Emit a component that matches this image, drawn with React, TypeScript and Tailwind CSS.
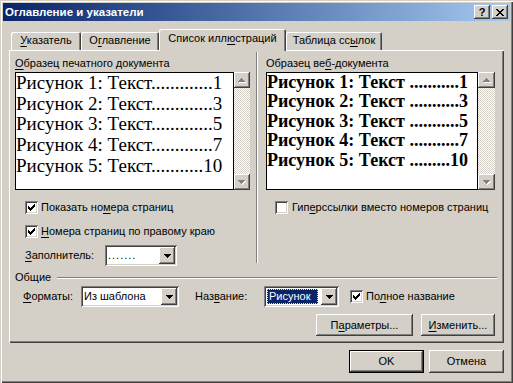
import type { ReactNode } from "react";

const RAISED = "shadow-[inset_-1px_-1px_0_#404040,inset_1px_1px_0_#ffffff,inset_-2px_-2px_0_#808080]";
const SUNKEN = "shadow-[inset_1px_1px_0_#808080,inset_-1px_-1px_0_#ffffff,inset_2px_2px_0_#404040,inset_-2px_-2px_0_#d4d0c8]";
const DEFAULT_BTN =
  "shadow-[inset_0_0_0_1px_#000000,inset_-2px_-2px_0_#404040,inset_2px_2px_0_#ffffff,inset_-3px_-3px_0_#808080]";

function U({ children }: { children: ReactNode }) {
  return <span className="underline decoration-1 underline-offset-[2px]">{children}</span>;
}

function CheckMark() {
  return (
    <svg width="7" height="7" viewBox="0 0 7 7" shapeRendering="crispEdges">
      <rect x="6" y="0" width="1" height="1" />
      <rect x="5" y="1" width="2" height="1" />
      <rect x="0" y="2" width="1" height="1" />
      <rect x="4" y="2" width="3" height="1" />
      <rect x="0" y="3" width="2" height="1" />
      <rect x="3" y="3" width="3" height="1" />
      <rect x="0" y="4" width="5" height="1" />
      <rect x="1" y="5" width="3" height="1" />
      <rect x="2" y="6" width="1" height="1" />
    </svg>
  );
}

function CheckBox({ checked }: { checked?: boolean }) {
  return (
    <div className={`flex h-[13px] w-[13px] shrink-0 items-center justify-center bg-white ${SUNKEN}`}>
      {checked && <CheckMark />}
    </div>
  );
}

function DownArrow() {
  return (
    <svg width="7" height="4" viewBox="0 0 7 4" shapeRendering="crispEdges">
      <rect x="0" y="0" width="7" height="1" />
      <rect x="1" y="1" width="5" height="1" />
      <rect x="2" y="2" width="3" height="1" />
      <rect x="3" y="3" width="1" height="1" />
    </svg>
  );
}

function GreyArrow({ up }: { up?: boolean }) {
  const rows = up
    ? [
        [3, 0, 1],
        [2, 1, 3],
        [1, 2, 5],
        [0, 3, 7],
      ]
    : [
        [0, 0, 7],
        [1, 1, 5],
        [2, 2, 3],
        [3, 3, 1],
      ];
  return (
    <svg width="8" height="5" viewBox="0 0 8 5" shapeRendering="crispEdges">
      {rows.map(([x, y, w]) => (
        <rect key={`s${y}`} x={x + 1} y={y + 1} width={w} height="1" fill="#ffffff" />
      ))}
      {rows.map(([x, y, w]) => (
        <rect key={`a${y}`} x={x} y={y} width={w} height="1" fill="#808080" />
      ))}
    </svg>
  );
}

function ScrollBar({ className }: { className: string }) {
  return (
    <div
      className={`flex shrink-0 flex-col bg-[image:repeating-conic-gradient(#ffffff_0_25%,#d4d0c8_0_50%)] bg-[length:2px_2px] ${className}`}
    >
      <div className={`flex h-[16px] items-center justify-center bg-[#d4d0c8] ${RAISED}`}>
        <GreyArrow up />
      </div>
      <div className="flex-1" />
      <div className={`flex h-[16px] items-center justify-center bg-[#d4d0c8] ${RAISED}`}>
        <GreyArrow />
      </div>
    </div>
  );
}

function Combo({ className, children }: { className: string; children?: ReactNode }) {
  return (
    <div className={`flex h-[21px] shrink-0 bg-white p-[2px] ${SUNKEN} ${className}`}>
      <div className="flex flex-1 items-center overflow-hidden pl-[1px]">{children}</div>
      <div className={`flex w-[16px] items-center justify-center bg-[#d4d0c8] ${RAISED}`}>
        <DownArrow />
      </div>
    </div>
  );
}

function Button({ className, children, primary }: { className: string; children: ReactNode; primary?: boolean }) {
  return (
    <div
      className={`flex items-center justify-center bg-[#d4d0c8] ${primary ? DEFAULT_BTN : RAISED} ${className}`}
    >
      {children}
    </div>
  );
}

function Tab({ className, children, active }: { className: string; children: ReactNode; active?: boolean }) {
  return (
    <div
      className={`flex items-start justify-center rounded-t-[2px] bg-[#d4d0c8] shadow-[inset_1px_1px_0_#ffffff,inset_-1px_0_0_#404040,inset_-2px_0_0_#808080] ${
        active ? "relative z-10 -mb-[1px] h-[22px] pt-[3px]" : "h-[18px] pt-[2px]"
      } ${className}`}
    >
      {children}
    </div>
  );
}

const printLines = [
  "Рисунок 1: Текст.............1",
  "Рисунок 2: Текст.............3",
  "Рисунок 3: Текст.............5",
  "Рисунок 4: Текст.............7",
  "Рисунок 5: Текст...........10",
];

const webLines = [
  "Рисунок 1: Текст ...........1",
  "Рисунок 2: Текст ...........3",
  "Рисунок 3: Текст ...........5",
  "Рисунок 4: Текст ...........7",
  "Рисунок 5: Текст .........10",
];

export default function App() {
  return (
    <div className="flex h-[383px] w-[513px] flex-col bg-[#d4d0c8] p-[3px] font-['Liberation_Sans',Arial,sans-serif] text-[11px] leading-[13px] text-black shadow-[inset_1px_1px_0_#d4d0c8,inset_2px_2px_0_#ffffff,inset_-1px_-1px_0_#404040,inset_-2px_-2px_0_#808080]">
      {/* title bar */}
      <div className="flex h-[18px] shrink-0 items-center bg-linear-to-r from-[#0a246a] to-[#a6caf0] pr-[2px] pl-[2px]">
        <span className="flex-1 text-[11.5px] font-bold text-white">Оглавление и указатели</span>
        <div className="flex gap-[2px]">
          <div className={`flex h-[14px] w-[16px] items-center justify-center bg-[#d4d0c8] text-[11px] font-bold ${RAISED}`}>
            ?
          </div>
          <div className={`flex h-[14px] w-[16px] items-center justify-center bg-[#d4d0c8] ${RAISED}`}>
            <svg width="8" height="7" viewBox="0 0 8 7" shapeRendering="crispEdges">
              <path d="M0 0h2v1h-2zM6 0h2v1h-2zM1 1h2v1h-2zM5 1h2v1h-2zM2 2h4v1h-4zM3 3h2v1h-2zM2 4h4v1h-4zM1 5h2v1h-2zM5 5h2v1h-2zM0 6h2v1h-2zM6 6h2v1h-2z" />
            </svg>
          </div>
        </div>
      </div>

      <div className="mt-[8px] px-[6px]">
        {/* tabs */}
        <div className="flex h-[21px] items-end pl-[2px]">
          <Tab className="w-[70px]">
            <span>
              <U>У</U>казатель
            </span>
          </Tab>
          <Tab className="w-[78px]">
            <span>
              О<U>г</U>лавление
            </span>
          </Tab>
          <Tab className="w-[127px]" active>
            <span>
              Список илл<U>ю</U>страций
            </span>
          </Tab>
          <Tab className="w-[96px]">
            <span>
              Таблица сс<U>ы</U>лок
            </span>
          </Tab>
        </div>

        {/* panel */}
        <div className="flex h-[293px] flex-col shadow-[inset_1px_1px_0_#ffffff,inset_-1px_-1px_0_#404040,inset_-2px_-2px_0_#808080]">
          <div className="flex">
            {/* left column */}
            <div className="flex w-[247px] flex-col pt-[7px] pl-[6px]">
              <div className="h-[13px]">
                <U>О</U>бразец печатного документа
              </div>
              <div className="mt-[2px] flex h-[118px]">
                <div className="w-[219px] overflow-hidden border border-black bg-white font-['Liberation_Serif','Times_New_Roman',serif] text-[19px] leading-[20.7px]">
                  {printLines.map((l) => (
                    <div key={l} className="whitespace-pre">
                      {l}
                    </div>
                  ))}
                </div>
                <ScrollBar className="w-[16px]" />
              </div>
              <div className="mt-[11px] flex items-center gap-[3px] pl-[10px]">
                <CheckBox checked />
                <span>
                  Показать но<U>м</U>ера страниц
                </span>
              </div>
              <div className="mt-[11px] flex items-center gap-[3px] pl-[10px]">
                <CheckBox checked />
                <span>
                  <U>Н</U>омера страниц по правому краю
                </span>
              </div>
              <div className="mt-[7px] flex items-center pl-[10px]">
                <span className="w-[80px]">
                  <U>З</U>аполнитель:
                </span>
                <Combo className="w-[72px]">
                  <span className="tracking-[1px]">.......</span>
                </Combo>
              </div>
            </div>

            {/* separator */}
            <div className="mt-[2px] h-[211px] w-[2px] border-r border-l border-r-white border-l-[#808080]" />

            {/* right column */}
            <div className="flex flex-1 flex-col pt-[7px] pl-[8px]">
              <div className="h-[13px]">
                Образец ве<U>б</U>-документа
              </div>
              <div className="mt-[2px] flex h-[118px]">
                <div className="w-[212px] overflow-hidden border border-black bg-white font-['Liberation_Serif','Times_New_Roman',serif] text-[18px] leading-[19.4px] font-bold">
                  {webLines.map((l) => (
                    <div key={l} className="whitespace-pre">
                      {l}
                    </div>
                  ))}
                </div>
                <ScrollBar className="w-[17px]" />
              </div>
              <div className="mt-[11px] flex items-center gap-[4px] pl-[9px]">
                <CheckBox />
                <span>
                  Гип<U>е</U>рссылки вместо номеров страниц
                </span>
              </div>
            </div>
          </div>

          {/* Общие */}
          <div className="mt-[5px] flex items-center pr-[7px] pl-[6px]">
            <span className="pr-[6px]">Общие</span>
            <div className="h-[2px] flex-1 border-t border-b border-t-[#808080] border-b-white" />
          </div>

          <div className="mt-[2px] flex items-center pl-[14px]">
            <span className="w-[58px]">
              <U>Ф</U>орматы:
            </span>
            <Combo className="w-[98px]">Из шаблона</Combo>
            <span className="ml-[16px] w-[69px]">
              Наз<U>в</U>ание:
            </span>
            <Combo className="w-[75px]">
              <span className="flex h-[15px] items-center border border-dotted border-[#e8e0a0] bg-[#0a246a] pr-[6px] pl-[1px] text-white">
                Рисунок
              </span>
            </Combo>
            <div className="ml-[11px] flex items-center gap-[3px]">
              <CheckBox checked />
              <span>
                По<U>л</U>ное название
              </span>
            </div>
          </div>

          <div className="mt-[7px] flex justify-end gap-[8px] pr-[9px]">
            <Button className="h-[22px] w-[97px]">
              <span>
                П<U>а</U>раметры...
              </span>
            </Button>
            <Button className="h-[22px] w-[74px]">
              <span>
                <U>И</U>зменить...
              </span>
            </Button>
          </div>
        </div>
      </div>

      <div className="mt-[7px] flex justify-end gap-[5px] px-[6px]">
        <Button className="h-[23px] w-[75px]" primary>
          OK
        </Button>
        <Button className="h-[23px] w-[75px]">Отмена</Button>
      </div>
    </div>
  );
}
